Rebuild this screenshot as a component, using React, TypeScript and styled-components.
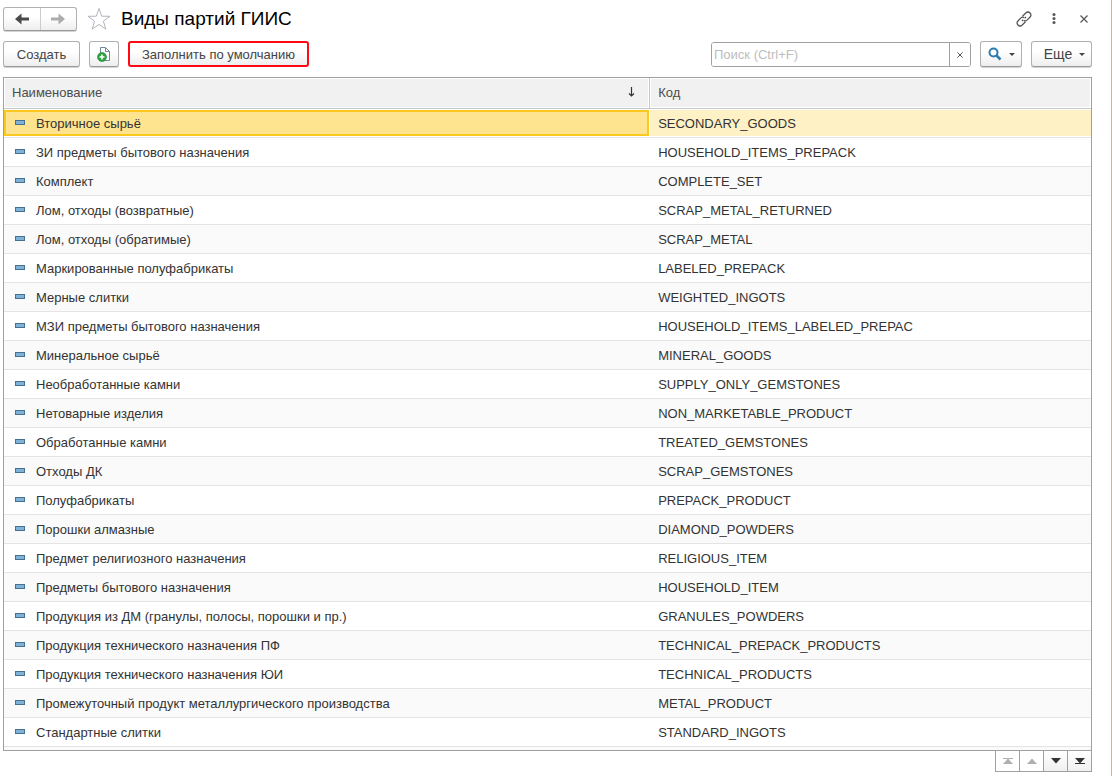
import React from "react";
import styled, { createGlobalStyle, css } from "styled-components";

const GlobalStyle = createGlobalStyle`
  *, *::before, *::after { box-sizing: border-box; }
  body { margin: 0; background: #fff; }
  body, button, input { font-family: "Liberation Sans", Arial, sans-serif; font-size: 13px; }
`;

const Page = styled.main`
  min-height: 100vh;
  padding: 7px 19px 4px 3px;
  border-right: 1px solid #c6bc7c;
  color: #333;
`;

const TitleBar = styled.header`
  display: flex;
  align-items: center;
  height: 24px;
`;

const raised = css`
  border: 1px solid #b0b0b0;
  border-bottom-color: #999;
  border-radius: 3px;
  background: linear-gradient(#fff 40%, #eee);
  box-shadow: 0 1px 0 #d4d4d4;
`;

const NavGroup = styled.nav`
  ${raised}
  display: flex;
  width: 74px;
  height: 24px;
`;

const NavButton = styled.button`
  flex: 1;
  display: flex;
  align-items: center;
  justify-content: center;
  padding: 0;
  border: 0;
  background: none;
  color: #4a4a4a;
  & + & { border-left: 1px solid #ccc; }
  &:disabled { color: #acacac; }
`;

const IconButton = styled.button`
  display: flex;
  align-items: center;
  justify-content: center;
  width: 24px;
  height: 24px;
  padding: 0;
  border: 0;
  background: none;
  color: #555;
`;

const Title = styled.h1`
  flex: 1;
  margin: 0 0 0 10px;
  font-size: 19px;
  line-height: 24px;
  font-weight: 400;
  color: #000;
`;

const WindowTools = styled.div`
  display: flex;
  gap: 6px;
  margin-right: -4px;
`;

const FavoriteButton = styled(IconButton)`
  margin-left: 10px;
`;

const Toolbar = styled.div`
  display: flex;
  align-items: flex-end;
  gap: 9px;
  height: 26px;
  margin: 10px 0;
`;

const Button = styled.button<{ $width: number; $marked?: boolean }>`
  ${raised}
  display: flex;
  align-items: center;
  justify-content: center;
  gap: 7px;
  width: ${(p) => p.$width}px;
  height: 26px;
  padding: 0;
  color: #444;
  white-space: nowrap;
  ${(p) => p.$marked && css`
    border: 2px solid #ff0a14;
    box-shadow: none;
  `}
`;

const MoreButton = styled(Button)`
  padding-left: 6px;
  font-size: 14px;
`;

const SearchField = styled.div`
  display: flex;
  width: 260px;
  height: 25px;
  margin-left: auto;
  border: 1px solid #a0a0a0;
  border-radius: 3px;
  overflow: hidden;
`;

const SearchInput = styled.input`
  flex: 1;
  min-width: 0;
  padding: 0 2px;
  border: 0;
  outline: 0;
  &::placeholder { color: #bdbdbd; opacity: 1; }
`;

const ClearButton = styled.button`
  display: flex;
  align-items: center;
  justify-content: center;
  width: 21px;
  padding: 0;
  border: 0;
  border-left: 1px solid #a0a0a0;
  background: #fff;
  color: #444;
`;

const TableFrame = styled.div`
  padding-bottom: 3px;
  border: 1px solid #a0a0a0;
  background: #fafafa;
`;

const Table = styled.table`
  width: 100%;
  table-layout: fixed;
  border-collapse: separate;
  border-spacing: 0;
`;

const HeadCell = styled.th<{ $width?: string }>`
  width: ${(p) => p.$width ?? "auto"};
  height: 31px;
  padding: 0 8px 2px;
  border-bottom: 1px solid #c8c8cc;
  background: #f1f1f1;
  box-shadow: inset 0 0 0 1px #fff;
  font-weight: 400;
  text-align: left;
  color: #4c4c4c;
  & + & { border-left: 1px solid #c8c8cc; }
`;

const HeadLabel = styled.span`
  display: flex;
  align-items: center;
  justify-content: space-between;
  padding-right: 6px;
`;

const Row = styled.tr`
  background: #fff;
  &:nth-child(odd) { background: #fafafa; }
  &[aria-selected="true"] { background: #fff; }
`;

const Cell = styled.td`
  height: 29px;
  padding: 1px 0;
  border-bottom: 1px solid #e4e4e4;
  line-height: 16px;
`;

const NameContent = styled.div<{ $selected: boolean }>`
  display: flex;
  align-items: center;
  gap: 11px;
  height: 26px;
  padding: 2px 9px 0;
  border: 2px solid ${(p) => (p.$selected ? "#fac81e" : "transparent")};
  background: ${(p) => (p.$selected ? "#ffe48f" : "transparent")};
`;

const CodeContent = styled.div<{ $selected: boolean }>`
  display: flex;
  align-items: center;
  height: 26px;
  margin-left: 1px;
  padding: 2px 8px 0;
  background: ${(p) => (p.$selected ? "#fdf1c5" : "transparent")};
`;

const ItemMark = styled.span`
  width: 10px;
  height: 5px;
  margin-bottom: 3px;
  border: 1px solid #46708f;
  background: #7fb2d6;
`;

const Pager = styled.div`
  display: flex;
  justify-content: flex-end;
`;

const PagerButton = styled.button`
  display: flex;
  align-items: center;
  justify-content: center;
  width: 25px;
  height: 21px;
  margin-left: -1px;
  padding: 0;
  border: 1px solid #a0a0a0;
  border-top: 0;
  background: linear-gradient(#fff, #f0f0f0);
  color: #333;
  &:disabled { background: #fff; color: #b0b0b0; }
`;

const Arrow = ({ flip }: { flip?: boolean }) => (
  <svg width="14" height="12" viewBox="0 0 14 12" fill="currentColor">
    <path d={flip ? "M0 4.500h7.500V.5L14 6l-6.500 5.500v-4H0z" : "M14 4.500H6.500V.5L0 6l6.500 5.500v-4H14z"} />
  </svg>
);

const Cross = ({ size }: { size: number }) => (
  <svg width={size} height={size} viewBox="0 0 8 8" stroke="currentColor" strokeWidth="1.2">
    <path d="M.5 .5l7 7M7.500 .5l-7 7" />
  </svg>
);

const Caret = () => (
  <svg width="6" height="3" viewBox="0 0 6 3" fill="#444"><path d="M0 0h6L3 3z" /></svg>
);

const PagerIcon = ({ up, bar }: { up?: boolean; bar?: boolean }) => (
  <svg width="10" height="8" viewBox="0 0 10 8" fill="currentColor">
    <path d={up ? "M0 7L5 1.500L10 7z" : "M0 1h10L5 6.500z"} />
    {bar && <path d={up ? "M0 1h10v1H0z" : "M0 6h10v1H0z"} />}
  </svg>
);

const items: [string, string][] = [
  ["Вторичное сырьё", "SECONDARY_GOODS"],
  ["ЗИ предметы бытового назначения", "HOUSEHOLD_ITEMS_PREPACK"],
  ["Комплект", "COMPLETE_SET"],
  ["Лом, отходы (возвратные)", "SCRAP_METAL_RETURNED"],
  ["Лом, отходы (обратимые)", "SCRAP_METAL"],
  ["Маркированные полуфабрикаты", "LABELED_PREPACK"],
  ["Мерные слитки", "WEIGHTED_INGOTS"],
  ["МЗИ предметы бытового назначения", "HOUSEHOLD_ITEMS_LABELED_PREPAC"],
  ["Минеральное сырьё", "MINERAL_GOODS"],
  ["Необработанные камни", "SUPPLY_ONLY_GEMSTONES"],
  ["Нетоварные изделия", "NON_MARKETABLE_PRODUCT"],
  ["Обработанные камни", "TREATED_GEMSTONES"],
  ["Отходы ДК", "SCRAP_GEMSTONES"],
  ["Полуфабрикаты", "PREPACK_PRODUCT"],
  ["Порошки алмазные", "DIAMOND_POWDERS"],
  ["Предмет религиозного назначения", "RELIGIOUS_ITEM"],
  ["Предметы бытового назначения", "HOUSEHOLD_ITEM"],
  ["Продукция из ДМ (гранулы, полосы, порошки и пр.)", "GRANULES_POWDERS"],
  ["Продукция технического назначения ПФ", "TECHNICAL_PREPACK_PRODUCTS"],
  ["Продукция технического назначения ЮИ", "TECHNICAL_PRODUCTS"],
  ["Промежуточный продукт металлургического производства", "METAL_PRODUCT"],
  ["Стандартные слитки", "STANDARD_INGOTS"],
];

export default function App() {
  const [selected, setSelected] = React.useState(0);
  return (
    <>
      <GlobalStyle />
      <Page>
        <TitleBar>
          <NavGroup aria-label="История">
            <NavButton aria-label="Назад"><Arrow /></NavButton>
            <NavButton aria-label="Вперед" disabled><Arrow flip /></NavButton>
          </NavGroup>
          <FavoriteButton aria-label="Добавить в избранное">
            <svg width="24" height="24" viewBox="0 0 24 24" fill="#fff" stroke="#b0b4ba" strokeWidth="1">
              <path d="M12 1.500l2.700 7.700 8.300.1-6.600 4.900 2.400 7.900L12 17.400l-6.800 4.700 2.400-7.900L1 9.300l8.300-.1z" />
            </svg>
          </FavoriteButton>
          <Title>Виды партий ГИИС</Title>
          <WindowTools>
            <IconButton aria-label="Получить ссылку">
              <svg width="16" height="16" viewBox="0 0 16 16" fill="none" stroke="currentColor" strokeWidth="1.300">
                <path d="M6.500 5.200L10 1.800a2.700 2.700 0 0 1 4 .2a2.700 2.700 0 0 1 .1 4L11 9.100a2.600 2.600 0 0 1-3.200.3" />
                <path d="M9.500 10.800L6 14.200a2.700 2.700 0 0 1-4-.2a2.700 2.700 0 0 1-.1-4L5 6.900a2.600 2.600 0 0 1 3.200-.3" />
                <path d="M6 10l1.300-1.300M8.700 7.300L10 6" />
              </svg>
            </IconButton>
            <IconButton aria-label="Дополнительные действия">
              <svg width="4" height="12" viewBox="0 0 4 12" fill="currentColor">
                <circle cx="2" cy="1.500" r="1.500" /><circle cx="2" cy="5.500" r="1.500" /><circle cx="2" cy="9.500" r="1.500" />
              </svg>
            </IconButton>
            <IconButton aria-label="Закрыть"><Cross size={8} /></IconButton>
          </WindowTools>
        </TitleBar>

        <Toolbar>
          <Button $width={77}>Создать</Button>
          <Button $width={30} aria-label="Создать копированием">
            <svg width="14" height="16" viewBox="0 0 14 16">
              <path d="M3.500 1.500h5l4 4v9h-9z" fill="#fff" stroke="#73879b" />
              <path d="M8.500 1.500v4h4" fill="none" stroke="#73879b" />
              <circle cx="5" cy="11" r="4.500" fill="#2ba33c" stroke="#1b8430" strokeWidth=".6" />
              <path d="M5 8.500v5M2.500 11h5" stroke="#fff" strokeWidth="1.600" />
            </svg>
          </Button>
          <Button $width={181} $marked>Заполнить по умолчанию</Button>
          <SearchField>
            <SearchInput aria-label="Поиск" placeholder="Поиск (Ctrl+F)" />
            <ClearButton aria-label="Очистить"><Cross size={6} /></ClearButton>
          </SearchField>
          <Button $width={42} aria-label="Найти">
            <svg width="14" height="14" viewBox="0 0 14 14" fill="none" stroke="#2d7bb0">
              <circle cx="5.500" cy="5.500" r="4" strokeWidth="2" />
              <path d="M8.500 8.500l4 4" strokeWidth="2.500" />
            </svg>
            <Caret />
          </Button>
          <MoreButton $width={61}>Еще<Caret /></MoreButton>
        </Toolbar>

        <TableFrame>
          <Table>
            <thead>
              <tr>
                <HeadCell $width="59.35%" aria-sort="ascending">
                  <HeadLabel>
                    Наименование
                    <svg width="7" height="10" viewBox="0 0 7 10" fill="none" stroke="#333" strokeWidth="1.200">
                      <path d="M3.500 0v9M1 6.500l2.500 2.500L6 6.500" />
                    </svg>
                  </HeadLabel>
                </HeadCell>
                <HeadCell>Код</HeadCell>
              </tr>
            </thead>
            <tbody>
              {items.map(([name, code], i) => (
                <Row key={code} aria-selected={i === selected} onClick={() => setSelected(i)}>
                  <Cell>
                    <NameContent $selected={i === selected}><ItemMark />{name}</NameContent>
                  </Cell>
                  <Cell>
                    <CodeContent $selected={i === selected}>{code}</CodeContent>
                  </Cell>
                </Row>
              ))}
            </tbody>
          </Table>
        </TableFrame>
        <Pager>
          <PagerButton aria-label="В начало" disabled><PagerIcon up bar /></PagerButton>
          <PagerButton aria-label="Выше" disabled><PagerIcon up /></PagerButton>
          <PagerButton aria-label="Ниже"><PagerIcon /></PagerButton>
          <PagerButton aria-label="В конец"><PagerIcon bar /></PagerButton>
        </Pager>
      </Page>
    </>
  );
}
